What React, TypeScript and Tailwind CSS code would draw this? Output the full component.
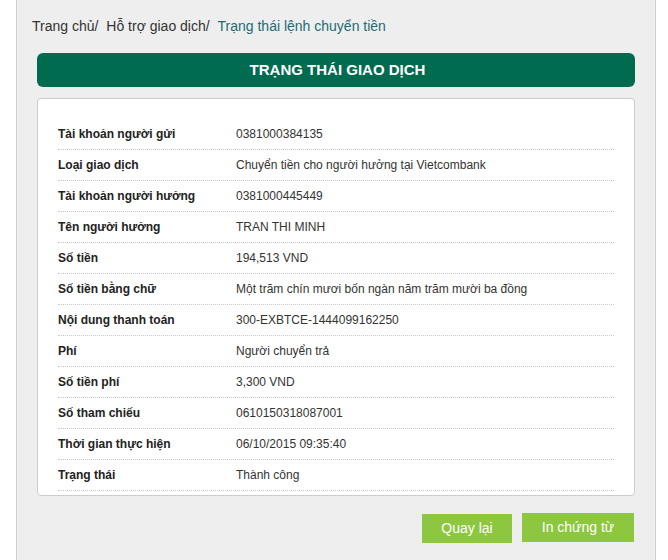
import React from 'react';

const rows: [string, string][] = [
  ['Tài khoản người gửi', '0381000384135'],
  ['Loại giao dịch', 'Chuyển tiền cho người hưởng tại Vietcombank'],
  ['Tài khoản người hưởng', '0381000445449'],
  ['Tên người hưởng', 'TRAN THI MINH'],
  ['Số tiền', '194,513 VND'],
  ['Số tiền bằng chữ', 'Một trăm chín mươi bốn ngàn năm trăm mười ba đồng'],
  ['Nội dung thanh toán', '300-EXBTCE-1444099162250'],
  ['Phí', 'Người chuyển trả'],
  ['Số tiền phí', '3,300 VND'],
  ['Số tham chiếu', '0610150318087001'],
  ['Thời gian thực hiện', '06/10/2015 09:35:40'],
  ['Trạng thái', 'Thành công'],
];

const App: React.FC = () => {
  return (
    <div className="flex h-[560px] w-[668px] bg-white font-['Liberation_Sans',Arial,sans-serif] text-[#333]">
      <div className="ml-4 flex h-full w-[640px] flex-col border-x border-[#cfcfcf] bg-[#eeeeee] pl-[14px] pr-[20px] pt-[17px]">
        <div className="pl-px text-[14px] leading-[18px]">
          <span>Trang chủ/ </span>
          <span className="ml-1">Hỗ trợ giao dịch/ </span>
          <span className="ml-1 text-[#1f6b73]">Trạng thái lệnh chuyển tiền</span>
        </div>

        <div className="ml-[6px] mt-[18px] flex h-[34px] items-center justify-center rounded-[6px] bg-[#006b4f] pl-[3px] text-[15px] font-bold text-white">
          TRẠNG THÁI GIAO DỊCH
        </div>

        <div className="ml-[6px] mt-[11px] rounded-[4px] border border-[#cccccc] bg-white px-5 pb-[4px] pt-[20px]">
          {rows.map(([label, value]) => (
            <div
              key={label}
              className="flex h-[31px] items-center border-b border-dotted border-[#c8c8c8] text-[12px]"
            >
              <div className="w-[178px] font-bold text-[#222]">{label}</div>
              <div className="text-[#333]">{value}</div>
            </div>
          ))}
        </div>

        <div className="mt-[17px] flex justify-end gap-[10px] pr-px">
          <button className="mt-px h-[29px] w-[90px] bg-[#8dc63f] text-[14px] text-white">Quay lại</button>
          <button className="h-[29px] w-[112px] bg-[#8dc63f] text-[14px] text-white">In chứng từ</button>
        </div>
      </div>
    </div>
  );
};

export default App;
